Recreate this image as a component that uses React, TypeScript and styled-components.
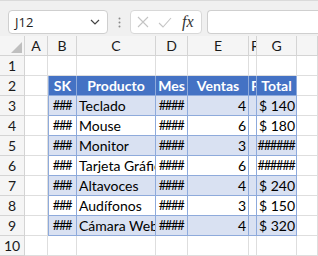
import React from 'react';
import styled, { createGlobalStyle } from 'styled-components';

const GlobalStyle = createGlobalStyle`
  html, body {
    margin: 0;
    padding: 0;
    background: #ffffff;
  }
  body {
    font-family: Lato, "Liberation Sans", sans-serif;
    overflow: hidden;
  }
`;

const Sheet = styled.div`
  width: 318px;
  height: 256px;
  display: flex;
  flex-direction: column;
  overflow: hidden;
`;

/* Formula bar */
const Toolbar = styled.div`
  height: 41px;
  box-sizing: border-box;
  border-top: 1px solid #dadada;
  background: #f0f0f0;
  display: flex;
  align-items: flex-start;
  padding: 9px 0 0 8px;
`;

const NameBox = styled.div`
  width: 100px;
  height: 24px;
  box-sizing: border-box;
  background: #ffffff;
  border: 1px solid #cfcfcf;
  border-radius: 4px;
  display: flex;
  align-items: center;
  justify-content: space-between;
  padding: 0 7px 0 6px;
  font-family: "Open Sans", "Liberation Sans", sans-serif;
  font-size: 13px;
  color: #1f1f1f;
`;

const Grip = styled.div`
  width: 22px;
  height: 24px;
  display: flex;
  align-items: center;
  justify-content: center;
`;

const FxBox = styled.div`
  width: 72px;
  height: 24px;
  box-sizing: border-box;
  background: #ffffff;
  border: 1px solid #d8d8d8;
  border-radius: 4px;
  display: flex;
  align-items: center;
  padding: 0 4px 0 6px;
  gap: 9px;
`;

const FxLabel = styled.span`
  font-family: "Liberation Serif", serif;
  font-style: italic;
  font-size: 16px;
  color: #333333;
  margin-left: 1px;
`;

const FormulaInput = styled.div`
  flex: 1;
  height: 24px;
  margin-left: 5px;
  box-sizing: border-box;
  background: #ffffff;
  border: 1px solid #cfcfcf;
  border-right: none;
  border-radius: 4px 0 0 4px;
`;

/* Grid */
const Grid = styled.div`
  display: grid;
  grid-template-columns: 25px 23px 29px 79px 32px 61px 8px 40px 21px;
  grid-auto-rows: 20px;
  font-family: Lato, "Liberation Sans", sans-serif;
  font-size: 14px;
  color: #000000;
`;

type Kind = 'corner' | 'colHead' | 'rowHead' | 'blank' | 'th' | 'td';

const lineColor = (k: Kind) => (k === 'th' || k === 'td' ? '#8eaadb' : k === 'blank' ? '#dedede' : '#d4d4d4');

const Cell = styled.div<{
  $kind: Kind;
  $align?: 'left' | 'right' | 'center';
  $band?: boolean;
  $first?: boolean;
  $hash?: boolean;
}>`
  box-sizing: border-box;
  position: relative;
  overflow: hidden;
  white-space: nowrap;
  line-height: 19px;
  padding: 0 2px;
  text-align: ${(p) => p.$align || 'left'};
  border-right: 1px solid ${(p) => lineColor(p.$kind)};
  border-bottom: 1px solid ${(p) => lineColor(p.$kind)};
  border-left: ${(p) => (p.$first ? '1px solid #8eaadb' : 'none')};
  background: ${(p) =>
    p.$kind === 'th'
      ? '#4472c4'
      : p.$kind === 'td' && p.$band
      ? '#d9e1f2'
      : p.$kind === 'colHead' || p.$kind === 'rowHead' || p.$kind === 'corner'
      ? '#f5f5f5'
      : '#ffffff'};
  color: ${(p) => (p.$kind === 'th' ? '#ffffff' : '#000000')};
  font-weight: ${(p) => (p.$kind === 'th' ? 700 : 400)};
  ${(p) => (p.$hash ? 'font-size: 13px; letter-spacing: -1.4px; text-align: center; padding: 0 1px 0 0;' : '')}
  ${(p) => (p.$kind === 'colHead' || p.$kind === 'rowHead' ? 'text-align: center; color: #1a1a1a;' : '')}
`;

const CornerMark = styled.svg`
  position: absolute;
  right: 2px;
  bottom: 2px;
`;

const columns = ['A', 'B', 'C', 'D', 'E', 'F', 'G', ''];

const rows = [
  { prod: 'Teclado', ventas: '4', total: '$ 140' },
  { prod: 'Mouse', ventas: '6', total: '$ 180' },
  { prod: 'Monitor', ventas: '3', total: '' },
  { prod: 'Tarjeta Gráfica', ventas: '6', total: '' },
  { prod: 'Altavoces', ventas: '4', total: '$ 240' },
  { prod: 'Audífonos', ventas: '3', total: '$ 150' },
  { prod: 'Cámara Web', ventas: '4', total: '$ 320' },
];

const headers: { label: string; align: 'left' | 'center' }[] = [
  { label: 'SK', align: 'center' },
  { label: 'Producto', align: 'center' },
  { label: 'Mes', align: 'center' },
  { label: 'Ventas', align: 'center' },
  { label: 'Precio', align: 'left' },
  { label: 'Total', align: 'center' },
];

const App: React.FC = () => {
  return (
    <Sheet>
      <GlobalStyle />
      <Toolbar>
        <NameBox>
          <span>J12</span>
          <svg width="10" height="6" viewBox="0 0 10 6">
            <path d="M1 1 L5 5 L9 1" fill="none" stroke="#444" strokeWidth="1.2" />
          </svg>
        </NameBox>
        <Grip>
          <svg width="3" height="11" viewBox="0 0 3 11">
            <circle cx="1.5" cy="1.5" r="1" fill="#8a8a8a" />
            <circle cx="1.5" cy="5.5" r="1" fill="#8a8a8a" />
            <circle cx="1.5" cy="9.5" r="1" fill="#8a8a8a" />
          </svg>
        </Grip>
        <FxBox>
          <svg width="12" height="12" viewBox="0 0 12 12">
            <path d="M1 1 L11 11 M11 1 L1 11" stroke="#c4c4c4" strokeWidth="1.1" />
          </svg>
          <svg width="14" height="11" viewBox="0 0 14 11">
            <path d="M1 6 L5 10 L13 1" fill="none" stroke="#c4c4c4" strokeWidth="1.1" />
          </svg>
          <FxLabel>fx</FxLabel>
        </FxBox>
        <FormulaInput />
      </Toolbar>

      <Grid>
        <Cell $kind="corner">
          <CornerMark width="11" height="11" viewBox="0 0 11 11">
            <polygon points="11,0 11,11 0,11" fill="#bfbfbf" />
          </CornerMark>
        </Cell>
        {columns.map((c, i) => (
          <Cell key={`h${i}`} $kind="colHead">
            {c}
          </Cell>
        ))}

        {/* row 1 */}
        <Cell $kind="rowHead">1</Cell>
        {columns.map((_, i) => (
          <Cell key={`r1${i}`} $kind="blank" />
        ))}

        {/* row 2: table header */}
        <Cell $kind="rowHead">2</Cell>
        <Cell $kind="blank" />
        {headers.map((h, i) => (
          <Cell key={`th${i}`} $kind="th" $align={h.align} $first={i === 0}>
            {h.label}
          </Cell>
        ))}
        <Cell $kind="blank" />

        {rows.map((r, i) => {
          const band = i % 2 === 0;
          return (
            <React.Fragment key={r.prod}>
              <Cell $kind="rowHead">{i + 3}</Cell>
              <Cell $kind="blank" />
              <Cell $kind="td" $band={band} $first $hash>
                ###
              </Cell>
              <Cell $kind="td" $band={band}>
                {r.prod}
              </Cell>
              <Cell $kind="td" $band={band} $hash>
                ####
              </Cell>
              <Cell $kind="td" $band={band} $align="right">
                {r.ventas}
              </Cell>
              <Cell $kind="td" $band={band} />
              {r.total ? (
                <Cell $kind="td" $band={band} $align="right">
                  {r.total}
                </Cell>
              ) : (
                <Cell $kind="td" $band={band} $hash>
                  ######
                </Cell>
              )}
              <Cell $kind="blank" />
            </React.Fragment>
          );
        })}

        <Cell $kind="rowHead">10</Cell>
        {columns.map((_, i) => (
          <Cell key={`r10${i}`} $kind="blank" />
        ))}
      </Grid>
    </Sheet>
  );
};

export default App;
